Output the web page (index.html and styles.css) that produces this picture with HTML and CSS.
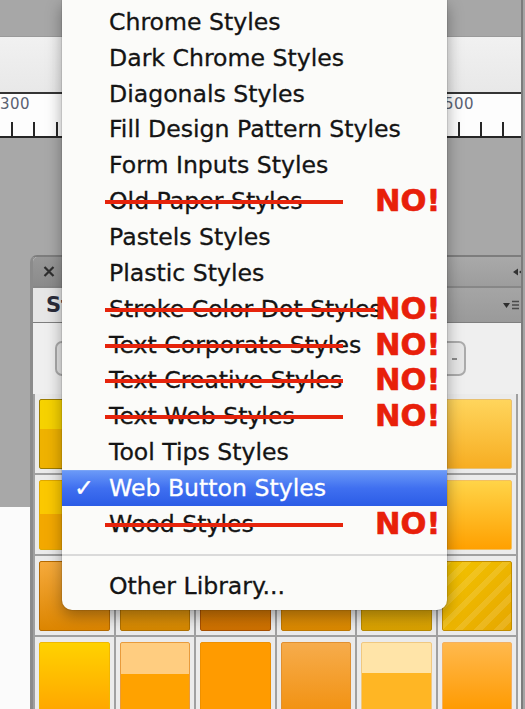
FILE: index.html
```html
<!DOCTYPE html>
<html>
<head>
<meta charset="utf-8">
<title>Styles library menu</title>
<link rel="stylesheet" href="styles.css">
</head>
<body>
<div class="screen">
  <div class="app">
    <div class="topbar"></div>
    <div class="appbar"></div>
    <div class="ruler">
      <span class="ruler-label label-300">300</span>
      <span class="ruler-label label-500">500</span>
    </div>
    <div class="workspace">
      <div class="pasteboard"></div>
      <div class="canvas"></div>
    </div>

    <section class="panel">
      <div class="p-title">
        <div class="close-tab">
          <svg width="12" height="11" viewBox="0 0 12 11"><path d="M1.5 1 L10.5 10 M10.5 1 L1.5 10" stroke="#2e2e2e" stroke-width="2.2" fill="none"/></svg>
        </div>
        <svg class="collapse" width="12" height="8" viewBox="0 0 12 8"><path d="M0 4 L5 0.5 L5 7.5 Z M6 4 L11 0.5 L11 7.5 Z" fill="#333"/></svg>
      </div>
      <div class="p-tabs">
        <div class="tab">Styles</div>
        <svg class="panel-menu" width="17" height="11" viewBox="0 0 17 11"><path d="M0 3 L7 3 L3.5 8 Z" fill="#2f2f2f"/><path d="M9 1.5 H16 M9 5 H16 M9 8.5 H16" stroke="#4a4a4a" stroke-width="1.4"/></svg>
      </div>
      <div class="p-tools">
        <div class="tool-btn"></div>
        <div class="tool-btn"><span class="tool-dash"></span></div>
      </div>
      <div class="grid">
        <div class="cell"><div class="sw gloss-yellow"></div></div>
        <div class="cell"><div class="sw amber-fade"></div></div>
        <div class="cell"><div class="sw orange-solid"></div></div>
        <div class="cell"><div class="sw orange-soft"></div></div>
        <div class="cell"><div class="sw cream-split"></div></div>
        <div class="cell"><div class="sw soft-yellow"></div></div>

        <div class="cell"><div class="sw amber-split"></div></div>
        <div class="cell"><div class="sw peach-split"></div></div>
        <div class="cell"><div class="sw orange-fade"></div></div>
        <div class="cell"><div class="sw yellow-fade"></div></div>
        <div class="cell"><div class="sw orange-soft"></div></div>
        <div class="cell"><div class="sw amber-fade"></div></div>

        <div class="cell"><div class="sw orange-dark"></div></div>
        <div class="cell"><div class="sw ochre"></div></div>
        <div class="cell"><div class="sw rust"></div></div>
        <div class="cell"><div class="sw tangerine"></div></div>
        <div class="cell"><div class="sw mustard"></div></div>
        <div class="cell"><div class="sw gold-diag"></div></div>

        <div class="cell"><div class="sw yellow-fade"></div></div>
        <div class="cell"><div class="sw peach-split"></div></div>
        <div class="cell"><div class="sw orange-solid"></div></div>
        <div class="cell"><div class="sw orange-soft"></div></div>
        <div class="cell"><div class="sw cream-split"></div></div>
        <div class="cell"><div class="sw orange-fade"></div></div>
      </div>
    </section>
  </div>

  <ul class="menu">
    <li class="item">Chrome Styles</li>
    <li class="item">Dark Chrome Styles</li>
    <li class="item">Diagonals Styles</li>
    <li class="item">Fill Design Pattern Styles</li>
    <li class="item">Form Inputs Styles</li>
    <li class="item">Old Paper Styles<span class="strike"></span><span class="no">NO!</span></li>
    <li class="item">Pastels Styles</li>
    <li class="item">Plastic Styles</li>
    <li class="item">Stroke Color Dot Styles<span class="strike strike-long"></span><span class="no">NO!</span></li>
    <li class="item">Text Corporate Styles<span class="strike"></span><span class="no">NO!</span></li>
    <li class="item">Text Creative Styles<span class="strike"></span><span class="no">NO!</span></li>
    <li class="item">Text Web Styles<span class="strike"></span><span class="no">NO!</span></li>
    <li class="item">Tool Tips Styles</li>
    <li class="item selected"><span class="check">✓</span>Web Button Styles</li>
    <li class="item">Wood Styles<span class="strike"></span><span class="no">NO!</span></li>
    <li class="separator"></li>
    <li class="item">Other Library...</li>
  </ul>
</div>
</body>
</html>
```

FILE: styles.css
```css
html, body {
  margin: 0;
  padding: 0;
}

body {
  background: #a6a6a6;
  font-family: "DejaVu Sans", "Liberation Sans", sans-serif;
}

.screen {
  position: relative;
  width: 525px;
  height: 709px;
  overflow: hidden;
  background: #a4a4a4;
}

.app {
  position: relative;
  width: 521px;
  height: 709px;
  border-right: 2px solid #7c7c7c;
  display: flex;
  flex-direction: column;
}

.topbar {
  height: 36px;
  flex: none;
  background: #a7a7a7;
  border-bottom: 1px solid #9a9a9a;
}

.appbar {
  height: 55px;
  flex: none;
  background: linear-gradient(#f1f1f1, #e8e8e8);
  border-bottom: 2px solid #343434;
}

.ruler {
  position: relative;
  height: 42px;
  flex: none;
  background:
    repeating-linear-gradient(to right, #262626 0 2px, transparent 2px 22.33px) 10.7px 100% / 100% 14px no-repeat,
    #fdfdfd;
  border-bottom: 2px solid #262626;
}

.ruler-label {
  position: absolute;
  top: 1px;
  font-size: 15px;
  line-height: 18px;
  color: #5a6272;
  letter-spacing: 0.5px;
}

.label-300 { left: 0; }
.label-500 { left: 444px; }

.workspace {
  flex: 1;
  display: flex;
  flex-direction: column;
}

.pasteboard {
  height: 369px;
  background: #a8a8a8;
}

.canvas {
  flex: 1;
  background: #fbfbfb;
}

/* floating styles panel */
.panel {
  position: absolute;
  left: 30px;
  top: 255px;
  right: 0;
  bottom: -20px;
  border-left: 3px solid #8b8b8b;
  border-top: 2px solid #7d7d7d;
  border-top-left-radius: 7px;
  background: #ededed;
  display: flex;
  flex-direction: column;
  overflow: hidden;
}

.p-title {
  height: 29px;
  flex: none;
  background: linear-gradient(#a9a9a9, #9d9d9d);
  display: flex;
  align-items: center;
}

.close-tab {
  width: 32px;
  height: 100%;
  background: linear-gradient(#989898, #8b8b8b);
  display: flex;
  align-items: center;
  justify-content: center;
  border-top-left-radius: 5px;
}

.collapse {
  margin-left: auto;
  margin-right: -4px;
}

.p-tabs {
  height: 34px;
  flex: none;
  border-top: 2px solid #878787;
  background: linear-gradient(#a5a5a5, #9a9a9a);
  display: flex;
  align-items: center;
}

.tab {
  width: 180px;
  height: 100%;
  box-sizing: border-box;
  padding-left: 13px;
  background: #e6e6e6;
  font-weight: bold;
  font-size: 21px;
  line-height: 34px;
  color: #2a2c3a;
}

.panel-menu {
  margin-left: auto;
  margin-right: 1px;
}

.p-tools {
  height: 71px;
  flex: none;
  border-top: 1px solid #7e7e7e;
  background: #efefef;
  display: flex;
  align-items: center;
  justify-content: space-between;
  padding: 0 55px 0 22px;
}

.tool-btn {
  width: 36px;
  height: 35px;
  box-sizing: border-box;
  border: 2px solid #ababab;
  border-radius: 7px;
  background: #e6e6e6;
  display: flex;
  align-items: center;
}

.tool-dash {
  width: 5px;
  height: 2px;
  margin-left: 20px;
  background: #8a8a8a;
}

.grid {
  align-self: flex-start;
  display: grid;
  grid-template-columns: repeat(6, 78.5px);
  grid-auto-rows: 79px;
  gap: 2px;
  padding: 0 2px;
  background: #a0a0a0;
}

.cell {
  background: #ebebeb;
  padding: 5px 4px 4px 4px;
  display: flex;
}

.sw {
  flex: 1;
  border: 1px solid rgba(150, 100, 0, 0.45);
  border-radius: 2px;
}

.gloss-yellow {
  background: linear-gradient(#f6d200 0 42%, #efb200 42% 100%);
  border-color: #9c7c00;
}
.soft-yellow { background: linear-gradient(#ffd55c, #f7ad22); border-color: #e8c070; }
.amber-split { background: linear-gradient(#fbc800 0 48%, #f3a800 48% 100%); border-color: #e0a800; }
.amber-fade { background: linear-gradient(#ffd448, #ffa000); border-color: #f2c060; }
.orange-dark { background: linear-gradient(#f6aa3c, #dc8500); border-color: #b56a00; }
.ochre { background: linear-gradient(#f2b030, #d58700); border-color: #b07000; }
.rust { background: linear-gradient(#e08a10, #cd7000); border-color: #a85000; }
.tangerine { background: linear-gradient(#f0a020, #da8800); border-color: #c07800; }
.mustard { background: linear-gradient(#f0c020, #d8a000); border-color: #b88a00; }
.gold-diag {
  background:
    repeating-linear-gradient(135deg, rgba(255,255,255,0.12) 0 6px, transparent 6px 14px),
    linear-gradient(135deg, #f3c400, #e6a700);
  border-color: #c08c00;
}
.yellow-fade { background: linear-gradient(#ffd200, #ffa600); border-color: #f0b800; }
.peach-split { background: linear-gradient(#ffcd80 0 46%, #ffa200 46% 100%); border-color: #e89b3c; }
.orange-solid { background: #ff9b00; border-color: #ee9000; }
.orange-soft { background: linear-gradient(#f6ac4c, #f29212); border-color: #e19030; }
.cream-split { background: linear-gradient(#ffe4a8 0 44%, #ffb624 44% 100%); border-color: #f0c880; }
.orange-fade { background: linear-gradient(#ffb94e, #ff9a00); border-color: #f4b060; }

/* pop-up menu */
.menu {
  position: absolute;
  left: 62px;
  top: 0;
  width: 385px;
  margin: 0;
  padding: 4px 0 6px;
  list-style: none;
  background: #fbfbf9;
  border-radius: 0 0 10px 10px;
  box-shadow: 0 6px 16px rgba(0, 0, 0, 0.35), 0 0 0 1px rgba(0, 0, 0, 0.08);
}

.item {
  position: relative;
  height: 35.85px;
  box-sizing: border-box;
  padding-left: 47px;
  display: flex;
  align-items: center;
  font-size: 23.6px;
  color: #141414;
  -webkit-text-stroke: 0.3px #141414;
  white-space: nowrap;
}

.item.selected {
  background: linear-gradient(#6a99f7, #3f6ff0 50%, #2b5ce6);
  border-top: 1px solid #7aa4f6;
  color: #ffffff;
  -webkit-text-stroke: 0.3px #ffffff;
}

.check {
  position: absolute;
  left: 12px;
  font-size: 24px;
}

.separator {
  height: 26px;
  display: flex;
  align-items: center;
}

.separator::before {
  content: "";
  flex: 1;
  height: 2px;
  background: #dadada;
}

.strike {
  position: absolute;
  left: 43px;
  top: 50%;
  width: 238px;
  height: 4px;
  margin-top: -1px;
  background: #e6240c;
}

.strike-long {
  width: 270px;
}

.no {
  position: absolute;
  left: 313px;
  top: 50%;
  margin-top: -15px;
  font-weight: bold;
  font-size: 30.5px;
  line-height: 30px;
  color: #e8200a;
  -webkit-text-stroke: 0.6px #e8200a;
}
```
